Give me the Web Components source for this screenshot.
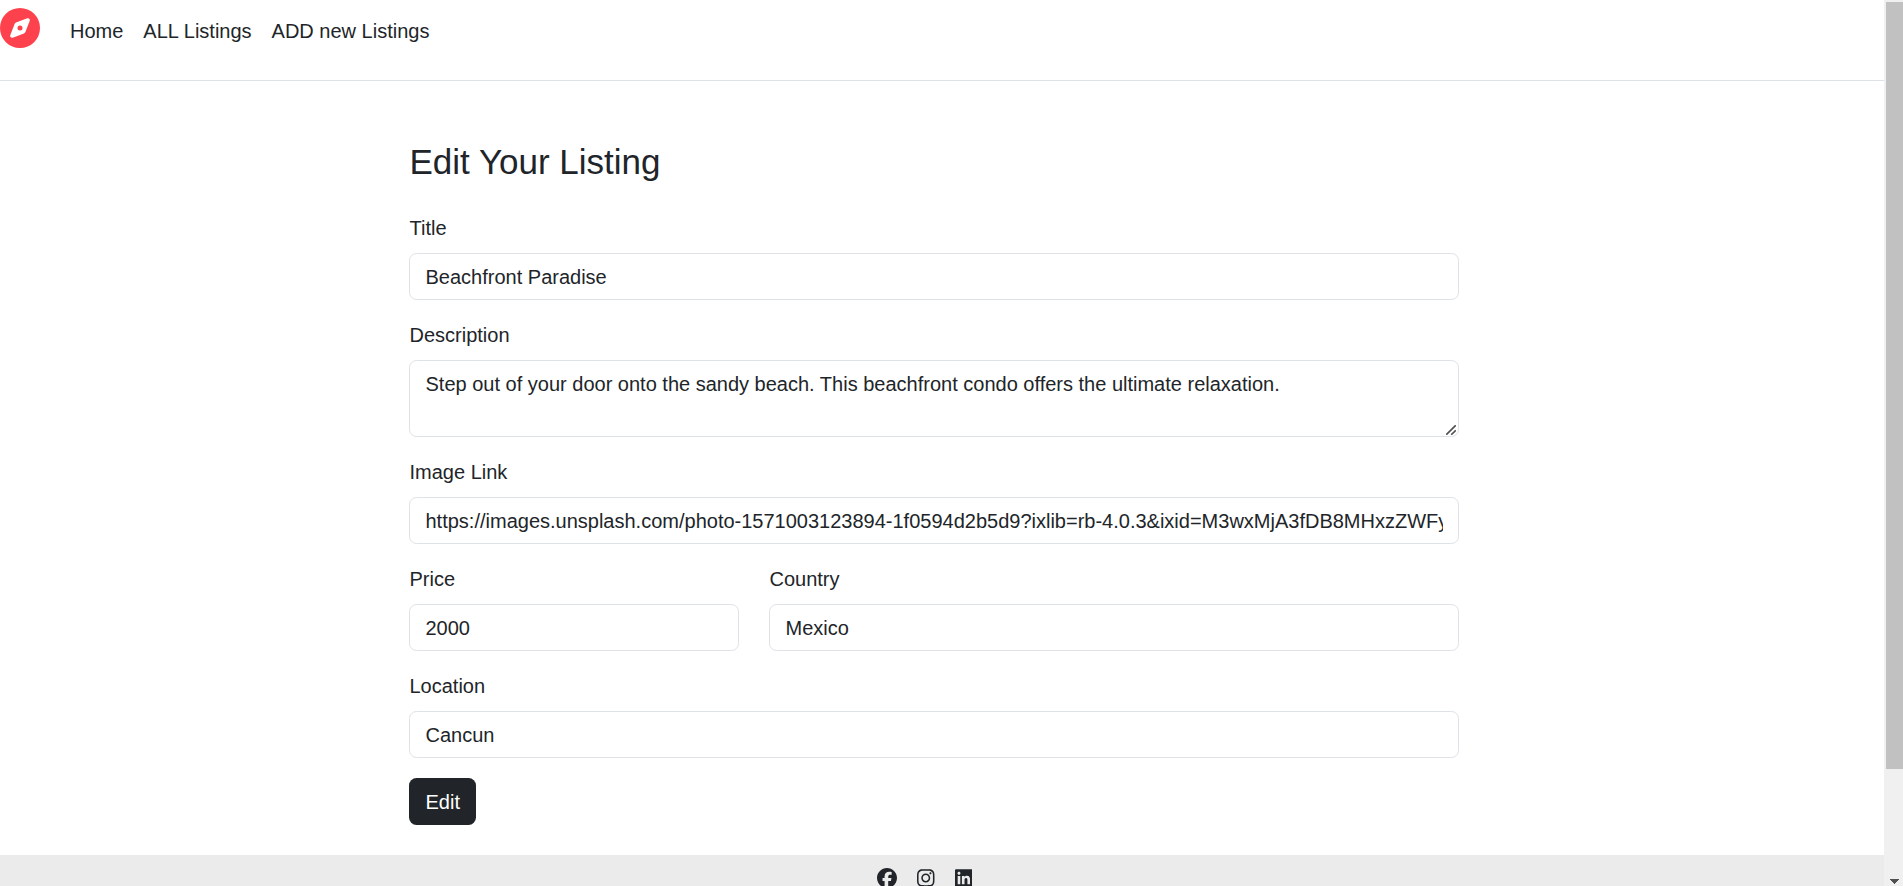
<!DOCTYPE html>
<html lang="en">
<head>
<meta charset="utf-8">
<title>Edit Your Listing</title>
<style>
html,body{margin:0;height:100%;overflow:hidden;background:#fff}
body{font:20px/30px "Liberation Sans",Arial,sans-serif;color:#212529}
</style>
</head>
<body>
<app-shell>
  <site-nav slot="header">
    <nav-link>Home</nav-link>
    <nav-link>ALL Listings</nav-link>
    <nav-link>ADD new Listings</nav-link>
  </site-nav>
  <listing-form heading="Edit Your Listing">
    <form-field label="Title" value="Beachfront Paradise"></form-field>
    <form-field label="Description" multiline value="Step out of your door onto the sandy beach. This beachfront condo offers the ultimate relaxation."></form-field>
    <form-field label="Image Link" value="https://images.unsplash.com/photo-1571003123894-1f0594d2b5d9?ixlib=rb-4.0.3&amp;ixid=M3wxMjA3fDB8MHxzZWFy"></form-field>
    <field-row>
      <form-field label="Price" value="2000"></form-field>
      <form-field label="Country" value="Mexico"></form-field>
    </field-row>
    <form-field label="Location" value="Cancun"></form-field>
    <dark-button>Edit</dark-button>
  </listing-form>
  <site-footer slot="footer"></site-footer>
</app-shell>
<script>
function define(name, html, setup) {
  customElements.define(name, class extends HTMLElement {
    constructor() {
      super();
      this.attachShadow({mode: 'open'}).innerHTML = html;
    }
    connectedCallback() {
      if (setup && !this.ready) { this.ready = true; setup(this, this.shadowRoot); }
    }
  });
}

define('app-shell', `
<style>
:host{display:grid;grid-template-columns:minmax(0,1fr) 19px;height:886px;overflow:hidden}
.page{display:flex;flex-direction:column;height:886px;overflow:hidden}
main{flex:0 0 auto;height:774px}
</style>
<div class="page"><slot name="header"></slot><main><slot></slot></main><slot name="footer"></slot></div>
<scroll-track></scroll-track>`);

define('scroll-track', `
<style>
:host{display:flex;flex-direction:column;justify-content:space-between;box-sizing:border-box;height:886px;padding:2px 0 2px 2px;background:#f0f0f0}
.thumb{height:767px;background:#c1c1c1}
svg{display:block;margin-left:4px}
</style>
<div class="thumb"></div>
<svg width="9" height="5" viewBox="0 0 9 5" shape-rendering="crispEdges"><path fill="#505050" d="M0 0H9V1H8V2H7V3H6V4H5V5H4V4H3V3H2V2H1V1H0Z"/></svg>`);

define('site-nav', `
<style>
:host{display:flex;flex:0 0 auto;box-sizing:border-box;height:81px;border-bottom:1px solid #dee2e6;padding-top:8px}
svg{display:block;width:40px;height:40px;fill:#fe424d}
nav{display:flex;gap:20px;padding:8px 0 0 30px}
</style>
<svg viewBox="0 0 512 512"><path d="M256 512A256 256 0 1 0 256 0a256 256 0 1 0 0 512zm50.7-186.9L162.4 380.6c-19.4 7.5-38.5-11.6-31-31l55.5-144.3c3.3-8.5 9.9-15.1 18.4-18.4l144.3-55.5c19.4-7.5 38.5 11.6 31 31L325.1 306.7c-3.2 8.5-9.9 15.1-18.4 18.4zM288 256a32 32 0 1 0 -64 0 32 32 0 1 0 64 0z"/></svg>
<nav><slot></slot></nav>`);

define('nav-link', `<style>:host{display:block;white-space:nowrap}</style><slot></slot>`);

define('listing-form', `
<style>
:host{display:flex;flex-direction:column;gap:20px;width:1050px;padding:60px 0 0 409px}
h3{margin:0 0 10px;padding-left:.5px;font-size:35px;line-height:42px;font-weight:400}
</style>
<h3></h3><slot></slot>`, (el, root) => {
  root.querySelector('h3').textContent = el.getAttribute('heading');
});

define('field-row', `
<style>:host{display:grid;grid-template-columns:330px 690px;gap:30px}</style><slot></slot>`);

define('form-field', `
<style>
:host{display:block}
label{display:block;margin-bottom:10px;padding-left:.5px}
.control{display:block;position:relative;box-sizing:border-box;height:47px;padding:7.5px 15px 7.5px 15.5px;border:1px solid #dee2e6;border-radius:7.5px;background:#fff}
.value{overflow:hidden;white-space:nowrap}
:host([multiline]) .control{height:77px}
svg{display:none;position:absolute;right:2px;bottom:1px}
:host([multiline]) svg{display:block}
</style>
<label></label>
<div class="control"><div class="value"></div>
<svg width="10" height="10" viewBox="0 0 10 10" fill="none" stroke="#505050" stroke-width="1.6"><path d="M.2 9.8 9.8.2M5.2 9.8 9.8 5.2"/></svg></div>`, (el, root) => {
  root.querySelector('label').textContent = el.getAttribute('label');
  root.querySelector('.value').textContent = el.getAttribute('value');
});

define('dark-button', `
<style>
:host{display:block;line-height:0}
button{box-sizing:border-box;height:47px;width:67px;padding:0 0 0 .5px;border:0;border-radius:7.5px;background:#212529;color:#fff;font:inherit;line-height:30px}
</style>
<button><slot></slot></button>`);

define('site-footer', `
<style>
:host{display:flex;flex:0 0 auto;box-sizing:border-box;height:120px;padding:12.5px 0 0 877px;gap:20px;background:#ebebeb}
svg{display:block;height:20px;fill:#212529}
</style>
<svg width="20" viewBox="0 0 512 512"><path d="M512 256C512 114.6 397.4 0 256 0S0 114.6 0 256C0 376 82.7 476.8 194.2 504.5V334.2H141.4V256h52.8V222.3c0-87.1 39.4-127.5 125-127.5c16.2 0 44.200 3.200 55.700 6.400V172c-6-.6-16.500-1-29.600-1c-42 0-58.200 15.900-58.200 57.200V256h83.600l-14.400 78.200H287V510.100C413.800 494.800 512 386.900 512 256z"/></svg>
<svg width="17.5" viewBox="0 0 448 512"><path d="M224.100 141c-63.600 0-114.900 51.300-114.900 114.900s51.300 114.900 114.900 114.900S339 319.500 339 255.900 287.700 141 224.100 141zm0 189.600c-41.100 0-74.700-33.500-74.700-74.700s33.500-74.700 74.700-74.700 74.700 33.500 74.700 74.700-33.600 74.700-74.700 74.700zm146.400-194.300c0 14.900-12 26.800-26.800 26.800-14.900 0-26.800-12-26.800-26.800s12-26.800 26.800-26.800 26.800 12 26.800 26.800zm76.100 27.200c-1.700-35.900-9.900-67.700-36.200-93.900-26.200-26.200-58-34.400-93.900-36.200-37-2.100-147.900-2.100-184.900 0-35.800 1.700-67.600 9.900-93.900 36.100s-34.400 58-36.200 93.900c-2.100 37-2.100 147.900 0 184.900 1.700 35.900 9.900 67.700 36.200 93.900s58 34.400 93.900 36.200c37 2.100 147.900 2.100 184.900 0 35.900-1.700 67.700-9.900 93.900-36.200 26.200-26.200 34.400-58 36.200-93.900 2.100-37 2.100-147.800 0-184.800zM398.800 388c-7.800 19.600-22.900 34.700-42.600 42.600-29.500 11.700-99.500 9-132.100 9s-102.700 2.600-132.100-9c-19.600-7.800-34.700-22.900-42.600-42.600-11.700-29.500-9-99.500-9-132.100s-2.600-102.700 9-132.100c7.800-19.600 22.900-34.700 42.600-42.600 29.500-11.700 99.500-9 132.100-9s102.700-2.600 132.100 9c19.600 7.800 34.700 22.900 42.600 42.600 11.700 29.500 9 99.500 9 132.100s2.700 102.700-9 132.100z"/></svg>
<svg width="17.5" viewBox="0 0 448 512"><path d="M416 32H31.900C14.300 32 0 46.500 0 64.300v383.400C0 465.500 14.300 480 31.900 480H416c17.600 0 32-14.500 32-32.300V64.300c0-17.800-14.400-32.300-32-32.300zM135.400 416H69V202.200h66.500V416zm-33.200-243c-21.300 0-38.500-17.300-38.500-38.500S80.900 96 102.200 96c21.200 0 38.500 17.300 38.500 38.500 0 21.300-17.200 38.500-38.500 38.500zm282.100 243h-66.400V312c0-24.800-.5-56.700-34.500-56.700-34.600 0-39.900 27-39.900 54.900V416h-66.400V202.200h63.700v29.200h.9c8.900-16.800 30.600-34.500 62.900-34.500 67.200 0 79.700 44.300 79.700 101.900V416z"/></svg>`);
</script>
</body>
</html>
